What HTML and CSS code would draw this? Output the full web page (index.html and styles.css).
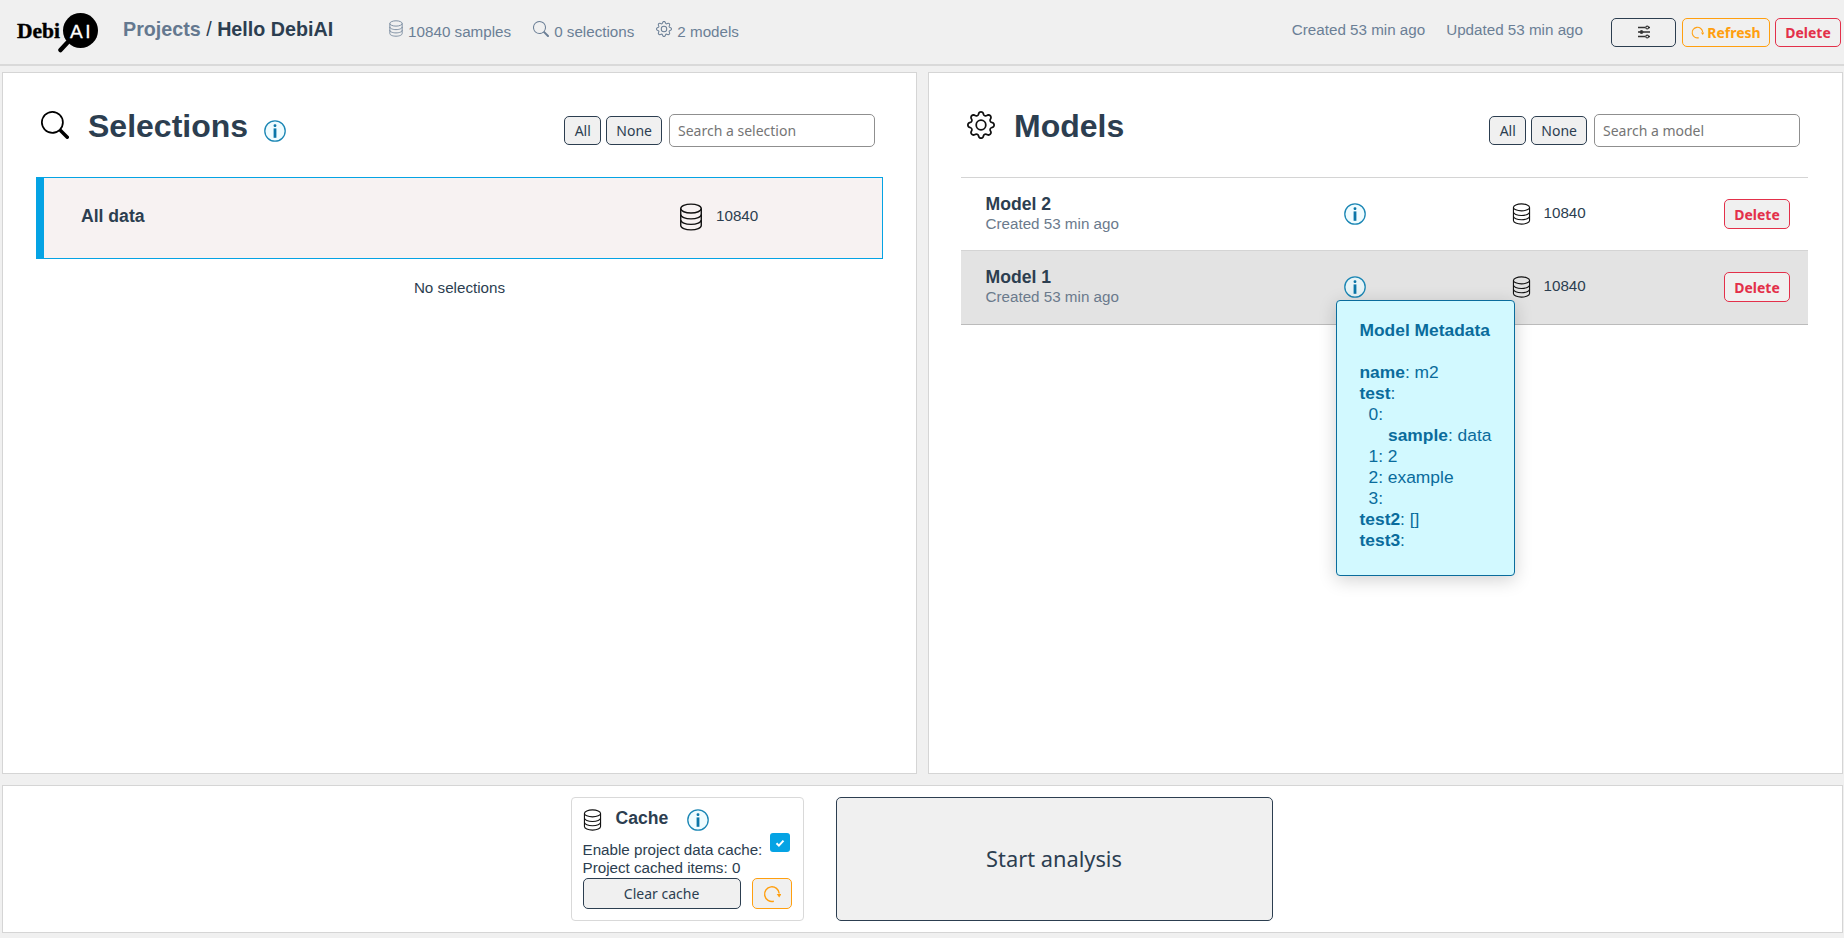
FILE: index.html
```html
<!DOCTYPE html>
<html lang="en">
<head>
<meta charset="utf-8">
<title>Hello DebiAI</title>
<link rel="stylesheet" href="styles.css">
</head>
<body>
<svg class="defs" width="0" height="0" aria-hidden="true">
  <defs>
    <symbol id="i-db" viewBox="0 0 20 24">
      <g fill="none" stroke="currentColor" stroke-width="1.2">
        <ellipse cx="10" cy="4.8" rx="8.8" ry="3.8"/>
        <path d="M1.2 4.8v14.4c0 2.1 3.9 3.8 8.8 3.8s8.8-1.7 8.8-3.8V4.8"/>
        <path d="M1.2 9.8c0 2.1 3.9 3.8 8.8 3.8s8.8-1.7 8.8-3.8"/>
        <path d="M1.2 14.5c0 2.1 3.9 3.8 8.8 3.8s8.8-1.7 8.8-3.8"/>
      </g>
    </symbol>
    <symbol id="i-search" viewBox="0 0 16 16">
      <path fill="currentColor" d="M11.742 10.344a6.5 6.5 0 1 0-1.397 1.398h-.001c.03.04.062.078.098.115l3.85 3.85a1 1 0 0 0 1.415-1.414l-3.85-3.85a1.007 1.007 0 0 0-.115-.1zM12 6.5a5.5 5.5 0 1 1-11 0 5.5 5.5 0 0 1 11 0z"/>
    </symbol>
    <symbol id="i-gear" viewBox="0 0 16 16">
      <path fill="currentColor" d="M8 4.754a3.246 3.246 0 1 0 0 6.492 3.246 3.246 0 0 0 0-6.492zM5.754 8a2.246 2.246 0 1 1 4.492 0 2.246 2.246 0 0 1-4.492 0z"/>
      <path fill="currentColor" d="M9.796 1.343c-.527-1.79-3.065-1.79-3.592 0l-.094.319a.873.873 0 0 1-1.255.52l-.292-.16c-1.64-.892-3.433.902-2.54 2.541l.159.292a.873.873 0 0 1-.52 1.255l-.319.094c-1.79.527-1.79 3.065 0 3.592l.319.094a.873.873 0 0 1 .52 1.255l-.16.292c-.892 1.64.901 3.434 2.541 2.54l.292-.159a.873.873 0 0 1 1.255.52l.094.319c.527 1.79 3.065 1.79 3.592 0l.094-.319a.873.873 0 0 1 1.255-.52l.292.16c1.64.893 3.434-.902 2.54-2.541l-.159-.292a.873.873 0 0 1 .52-1.255l.319-.094c1.79-.527 1.79-3.065 0-3.592l-.319-.094a.873.873 0 0 1-.52-1.255l.16-.292c.893-1.64-.902-3.433-2.541-2.54l-.292.159a.873.873 0 0 1-1.255-.52l-.094-.319zm-2.633.283c.246-.835 1.428-.835 1.674 0l.094.319a1.873 1.873 0 0 0 2.693 1.115l.291-.16c.764-.415 1.6.42 1.184 1.185l-.159.292a1.873 1.873 0 0 0 1.116 2.692l.318.094c.835.246.835 1.428 0 1.674l-.319.094a1.873 1.873 0 0 0-1.115 2.693l.16.291c.415.764-.42 1.6-1.185 1.184l-.291-.159a1.873 1.873 0 0 0-2.693 1.116l-.094.318c-.246.835-1.428.835-1.674 0l-.094-.319a1.873 1.873 0 0 0-2.692-1.115l-.292.16c-.764.415-1.6-.42-1.184-1.185l.159-.291A1.873 1.873 0 0 0 1.945 8.93l-.319-.094c-.835-.246-.835-1.428 0-1.674l.319-.094A1.873 1.873 0 0 0 3.06 4.377l-.16-.292c-.415-.764.42-1.6 1.185-1.184l.292.159a1.873 1.873 0 0 0 2.692-1.115l.094-.319z"/>
    </symbol>
    <symbol id="i-info" viewBox="0 0 22 22">
      <circle cx="11" cy="11" r="10.2" fill="#e8fbff" fill-opacity=".7" stroke="#1a86b4" stroke-width="1.3"/>
      <rect x="9.6" y="4.2" width="2.8" height="2.8" rx="1.2" fill="#0a76a8"/>
      <rect x="9.6" y="8.4" width="2.8" height="9.4" fill="#0a76a8"/>
    </symbol>
    <symbol id="i-sliders" viewBox="0 0 14 14">
      <g fill="none" stroke="currentColor">
        <path stroke-width="1.6" d="M1 2.5h7.5M12 2.5h1M1 7h2M6 7h7M1 11.5h7.5M12 11.5h1"/>
        <circle cx="10.2" cy="2.5" r="1.4" stroke-width="1.1"/>
        <circle cx="4.5" cy="7" r="1.5" fill="currentColor" stroke-width="1"/>
        <circle cx="10.2" cy="11.5" r="1.4" stroke-width="1.1"/>
      </g>
    </symbol>
    <symbol id="i-refresh" viewBox="0 0 16 16">
      <path fill="none" stroke="currentColor" stroke-width="1.3" d="M9.6 14.4A6.5 6.5 0 1 1 14.4 7.6"/>
      <path fill="currentColor" d="M12.2 8h4.2l-2 3z"/>
    </symbol>
  </defs>
</svg>

<header class="topbar">
  <div class="logo">
    <svg class="logo-svg" width="82" height="40" viewBox="0 0 82 40">
      <text class="logo-debi" x="1" y="25">Debi</text>
      <circle cx="64.5" cy="17.5" r="17.5" fill="#000"/>
      <text class="logo-ai" x="65.5" y="25" text-anchor="middle">AI</text>
      <path d="M51 30L44.5 37" stroke="#000" stroke-width="4.5" stroke-linecap="round"/>
    </svg>
  </div>
  <div class="crumbs"><span class="crumb-link">Projects</span> <span class="crumb-sep">/</span> <span class="crumb-current">Hello DebiAI</span></div>
  <div class="stats">
    <span class="stat"><svg class="ic ic-stat-db"><use href="#i-db"/></svg>10840 samples</span>
    <span class="stat"><svg class="ic ic-stat"><use href="#i-search"/></svg>0 selections</span>
    <span class="stat"><svg class="ic ic-stat"><use href="#i-gear"/></svg>2 models</span>
  </div>
  <div class="top-right">
    <span class="date">Created 53 min ago</span>
    <span class="date">Updated 53 min ago</span>
    <div class="top-actions">
      <button class="btn btn-settings"><svg class="ic ic-sliders"><use href="#i-sliders"/></svg></button>
      <button class="btn btn-warn"><svg class="ic ic-small"><use href="#i-refresh"/></svg>Refresh</button>
      <button class="btn btn-danger">Delete</button>
    </div>
  </div>
</header>

<main class="panels">
  <section class="panel">
    <div class="panel-head">
      <svg class="ic ic-head ic-head-search"><use href="#i-search"/></svg>
      <h2 class="panel-title">Selections</h2>
      <svg class="ic ic-info ic-title-info"><use href="#i-info"/></svg>
      <div class="filters">
        <button class="btn btn-filter">All</button>
        <button class="btn btn-filter">None</button>
        <input class="search" placeholder="Search a selection">
      </div>
    </div>
    <div class="panel-body-left">
      <div class="all-data">
        <span class="all-data-name">All data</span>
        <svg class="ic ic-db"><use href="#i-db"/></svg>
        <span class="count">10840</span>
      </div>
      <p class="empty">No selections</p>
    </div>
  </section>

  <section class="panel">
    <div class="panel-head panel-head-right">
      <svg class="ic ic-head"><use href="#i-gear"/></svg>
      <h2 class="panel-title">Models</h2>
      <div class="filters">
        <button class="btn btn-filter">All</button>
        <button class="btn btn-filter">None</button>
        <input class="search" placeholder="Search a model">
      </div>
    </div>
    <div class="model-list">
      <div class="model model-first">
        <div><div class="model-name">Model 2</div><div class="model-date">Created 53 min ago</div></div>
        <div class="info-wrap"><svg class="ic ic-info"><use href="#i-info"/></svg></div>
        <div class="model-count"><svg class="ic ic-db-sm"><use href="#i-db"/></svg><span class="count">10840</span></div>
        <button class="btn btn-danger btn-row">Delete</button>
      </div>
      <div class="model model-hover">
        <div><div class="model-name">Model 1</div><div class="model-date">Created 53 min ago</div></div>
        <div class="info-wrap">
          <svg class="ic ic-info"><use href="#i-info"/></svg>
          <div class="tooltip">
            <div class="tip-title">Model Metadata</div>
            <div class="tip-line"><b>name</b>: m2</div>
            <div class="tip-line"><b>test</b>:</div>
            <div class="tip-line tip-l1">0:</div>
            <div class="tip-line tip-l2"><b>sample</b>: data</div>
            <div class="tip-line tip-l1">1: 2</div>
            <div class="tip-line tip-l1">2: example</div>
            <div class="tip-line tip-l1">3:</div>
            <div class="tip-line"><b>test2</b>: []</div>
            <div class="tip-line"><b>test3</b>:</div>
          </div>
        </div>
        <div class="model-count"><svg class="ic ic-db-sm"><use href="#i-db"/></svg><span class="count">10840</span></div>
        <button class="btn btn-danger btn-row">Delete</button>
      </div>
    </div>
  </section>
</main>

<footer class="bottom">
  <div class="cache">
    <div class="cache-head">
      <svg class="ic ic-db-sm"><use href="#i-db"/></svg>
      <span class="cache-title">Cache</span>
      <svg class="ic ic-info"><use href="#i-info"/></svg>
    </div>
    <div class="cache-line cache-enable">
      <span>Enable project data cache:</span>
      <span class="checkbox"><svg width="12" height="12" viewBox="0 0 12 12"><path d="M2.5 6.2l2.4 2.4 4.6-5" fill="none" stroke="#fff" stroke-width="2"/></svg></span>
    </div>
    <div class="cache-line">Project cached items: 0</div>
    <div class="cache-actions">
      <button class="btn btn-clear">Clear cache</button>
      <button class="btn btn-warn btn-cache-refresh"><svg class="ic ic-refresh"><use href="#i-refresh"/></svg></button>
    </div>
  </div>
  <button class="btn btn-start">Start analysis</button>
</footer>
</body>
</html>
```

FILE: styles.css
```css
* { box-sizing: border-box; }
html, body { height: 100%; }
body {
  margin: 0;
  height: 938px;
  overflow: hidden;
  background: #f0f0f0;
  color: #2c3e50;
  font-family: "Liberation Sans", Arial, sans-serif;
  font-size: 15.2px;
}
.defs { position: absolute; }
.ic { display: block; flex: none; }

.btn {
  font-family: "Noto Sans", sans-serif;
  background: #f0f0f0;
  border: 1px solid #2c3e50;
  border-radius: 5px;
  color: #2c3e50;
  padding: 0;
  display: inline-flex;
  align-items: center;
  justify-content: center;
}

/* header */
.topbar {
  height: 66px;
  display: flex;
  align-items: center;
  border-bottom: 2px solid #d9d9d9;
  padding: 0 3px 0 16px;
}
.logo { width: 82px; height: 40px; margin-top: 2px; }
.logo-svg { display: block; }
.logo-debi { font-family: "Liberation Serif", serif; font-weight: 700; font-size: 21.5px; fill: #000; stroke: #000; stroke-width: .4px; }
.logo-ai { font-family: "Liberation Sans", sans-serif; font-size: 19px; letter-spacing: 2.5px; fill: #fff; stroke: #fff; stroke-width: .3px; }
.crumbs { margin: -5px 0 0 25px; font-size: 19.7px; font-weight: 700; white-space: pre; }
.crumb-link { color: #64788f; }
.crumb-sep { font-weight: 400; }
.stats { display: flex; margin: 0 0 0 56px; gap: 22px; }
.stat { display: flex; align-items: center; gap: 5px; color: #6b7f96; font-size: 15.2px; margin-top: -2px; }
.ic-stat { width: 16px; height: 16px; margin-top: -5px; }
.ic-stat-db { width: 14px; height: 17px; margin-top: -5px; }
.top-right { margin-left: auto; display: flex; align-items: center; }
.date { color: #6b7f96; font-size: 15.2px; margin: -6px 21px 0 0; }
.date + .date { margin-right: 28px; }
.top-actions { display: flex; gap: 5px; }
.top-actions .btn { height: 29px; font-size: 14px; font-weight: 700; }
.btn-settings { width: 65px; margin-right: 1px; }
.ic-sliders { width: 14px; height: 14px; color: #333; }
.btn-warn { border-color: #ff9f0f; color: #ff9f0f; }
.top-actions .btn-warn { width: 88px; gap: 3px; }
.ic-small { width: 13px; height: 13px; }
.btn-danger { border-color: #e3304a; color: #e3304a; font-weight: 700; }
.top-actions .btn-danger { width: 66px; }

/* panels */
.panels {
  display: grid;
  grid-template-columns: 1fr 1fr;
  gap: 11px;
  height: 708px;
  padding: 6px 1px 0 2px;
}
.panel { background: #fff; border: 1px solid #d5d5d5; min-width: 0; }
.panel-head {
  height: 104px;
  display: flex;
  align-items: center;
  padding: 13px 41px 4px 38px;
}
.panel-head-right { padding-right: 42px; }
.ic-head { width: 28px; height: 28px; color: #111; margin-top: -10px; }
.ic-head-search { color: #000; }
.panel-title { margin: -7px 0 0 19px; font-size: 32px; font-weight: 700; line-height: 38px; }
.ic-info { width: 22px; height: 22px; color: #0a76a8; }
.ic-title-info { margin: 2px 0 0 16px; }
.filters { margin: 2px 0 0 auto; display: flex; align-items: center; gap: 5px; }
.btn-filter { height: 29px; padding: 0 9.5px; font-size: 14px; }
.btn-filter + .btn-filter { padding: 0 9px; }
.search {
  width: 206px;
  height: 33px;
  margin-left: 2px;
  padding: 0 8px;
  border: 1px solid #8f8f8f;
  border-radius: 5px;
  background: #fff;
  font-family: "Noto Sans", sans-serif;
  font-size: 14px;
}
.search::placeholder { color: #757575; opacity: 1; }

.panel-body-left { padding: 0 33px; }
.all-data {
  height: 82px;
  display: flex;
  align-items: center;
  background: #f7f2f2;
  border: 1px solid #05a3e4;
  border-left-width: 8px;
  padding: 0 0 2px 37px;
}
.all-data-name { flex: 0 0 598px; font-size: 17.6px; font-weight: 700; margin-top: -2px; }
.ic-db { width: 24px; height: 28px; color: #111; }
.count { font-size: 15.2px; color: #2c3e50; margin: -3px 0 0 13px; }
.empty { margin: 20px 0 0; text-align: center; font-size: 15.2px; }

.model-list { margin: 0 34px 0 32px; border-top: 1px solid #d4d4d4; }
.model {
  height: 72px;
  display: grid;
  grid-template-columns: 358px 168px 1fr auto;
  align-items: center;
  padding: 0 18px 0 24.5px;
}
.model-first { padding-bottom: 1px; }
.model-hover { height: 75px; padding-bottom: 2px; background: #e3e3e3; border-top: 1px solid #d4d4d4; border-bottom: 1px solid #bbb; }
.model-name { font-size: 17.6px; font-weight: 700; line-height: 19px; }
.model-date { font-size: 15.2px; color: #6b7a8c; line-height: 19px; }
.info-wrap { position: relative; width: 22px; height: 22px; margin-left: .5px; }
.ic-db-sm { width: 19px; height: 22px; color: #111; }
.model-count { display: flex; align-items: center; }
.btn-row { width: 66px; height: 30px; font-size: 14px; margin-top: 1px; }

.tooltip {
  position: absolute;
  z-index: 5;
  left: -8px;
  top: 24px;
  width: 179px;
  height: 276px;
  padding: 19px 0 0 22.5px;
  background: #d2f9ff;
  border: 1px solid #0a6c9c;
  border-radius: 4px;
  box-shadow: 0 4px 18px rgba(0, 0, 0, .18);
  color: #0a6c9c;
  font-size: 17.4px;
  line-height: 21px;
}
.tip-title { font-weight: 700; margin-bottom: 21px; white-space: nowrap; }
.tip-line { white-space: nowrap; }
.tip-l1 { padding-left: 9px; }
.tip-l2 { padding-left: 28.5px; }

/* footer */
.bottom {
  height: 148px;
  margin: 11px 1px 0 2px;
  padding-right: 2px;
  background: #fff;
  border: 1px solid #d5d5d5;
  display: flex;
  align-items: center;
  justify-content: center;
  gap: 32px;
}
.cache {
  width: 233px;
  height: 124px;
  padding: 11px 11px 0;
  border: 1px solid #d9d9d9;
  border-radius: 4px;
}
.cache-head { display: flex; align-items: center; height: 22px; margin-bottom: 2px; }
.cache-title { font-size: 17.6px; font-weight: 700; margin: -3px 0 0 14px; width: 71px; }
.cache-line { line-height: 18px; font-size: 15.2px; white-space: nowrap; }
.cache-enable { display: flex; align-items: flex-end; gap: 8px; height: 26px; }
.checkbox {
  width: 20px;
  height: 19px;
  margin: 0 0 7px;
  border-radius: 3px;
  background: #05a3e4;
  display: flex;
  align-items: center;
  justify-content: center;
}
.cache-actions { display: flex; gap: 11px; margin-top: 1px; }
.btn-clear { width: 159px; height: 31px; font-size: 14px; }
.btn-cache-refresh { width: 40px; height: 31px; }
.ic-refresh { width: 18px; height: 18px; }
.btn-start { width: 437px; height: 124px; padding-bottom: 2px; font-size: 21.8px; }
```
